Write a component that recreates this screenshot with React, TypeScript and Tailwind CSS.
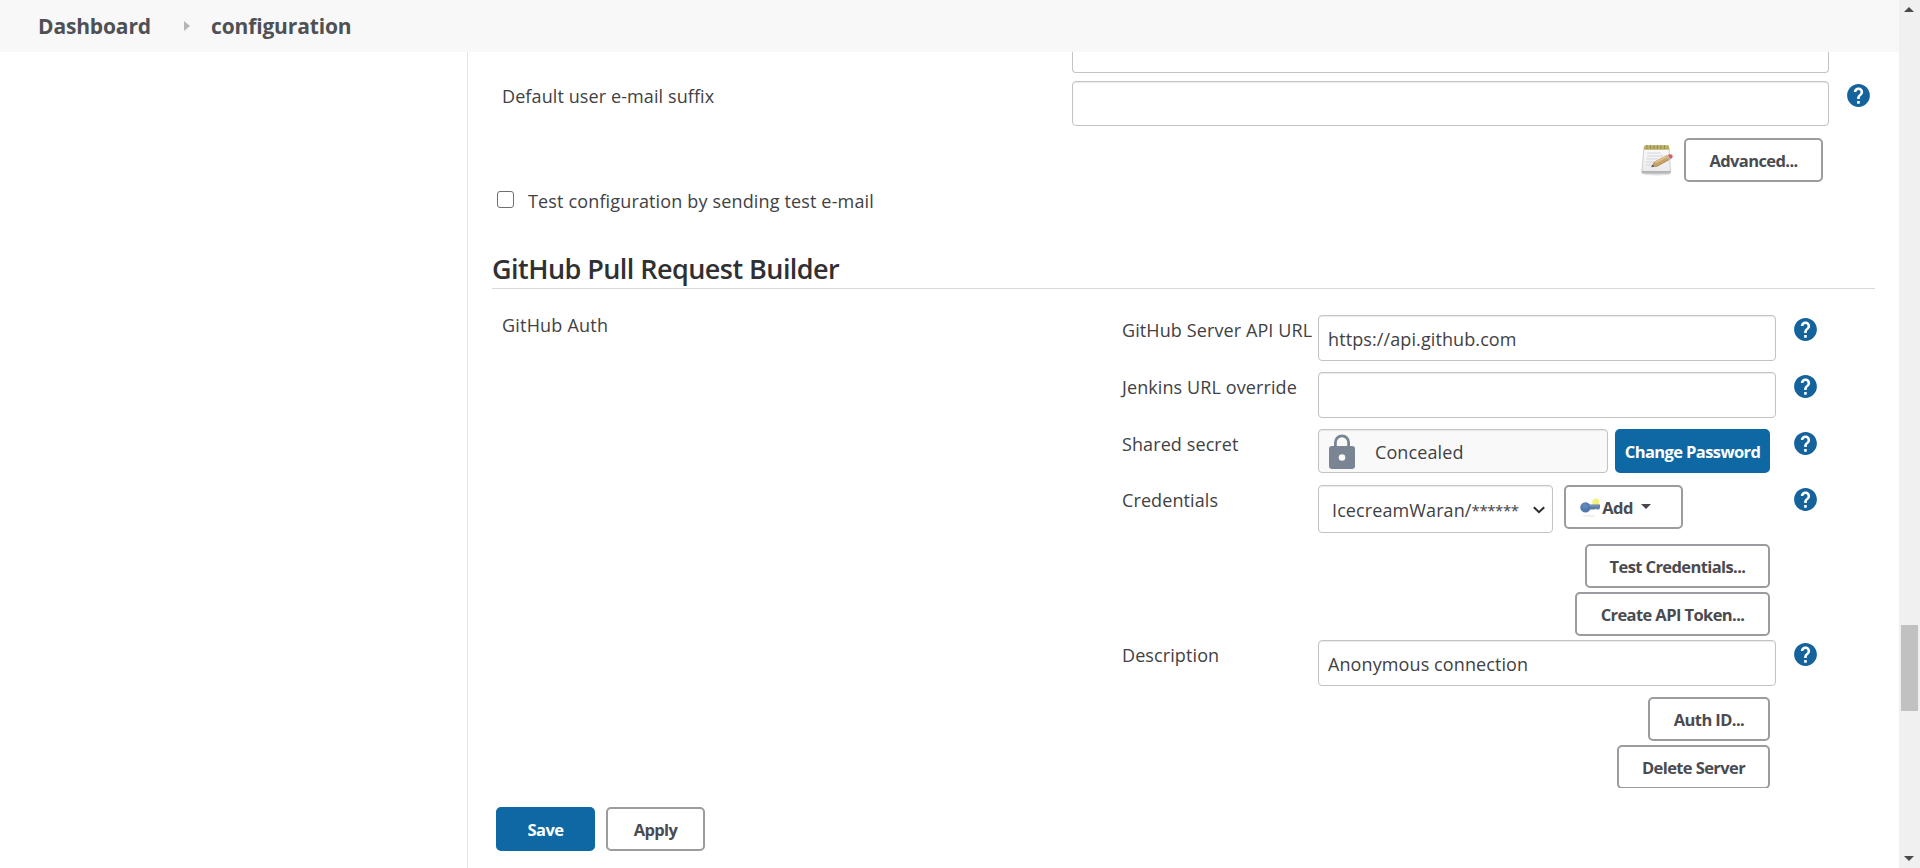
import type { ReactNode } from "react";

function HelpIcon({ className = "" }: { className?: string }) {
  return (
    <svg viewBox="1.9 1.9 20.2 20.2" className={`size-[23px] shrink-0 ${className}`} aria-label="Help">
      <path
        fill="#14639c"
        stroke="none"
        d="M12 2C6.48 2 2 6.48 2 12s4.480 10 10 10 10-4.480 10-10S17.520 2 12 2zm1.100 17.200h-2.300v-2.300h2.300v2.300zm2.070-7.850l-.9.920C13.450 13 13.100 13.600 13.100 15.100h-2.300v-.6c0-1.100.45-2.100 1.170-2.830l1.240-1.260c.37-.36.59-.86.59-1.410 0-1-.8-1.800-1.800-1.800s-1.800.8-1.800 1.800H7.900c0-2.250 1.840-4.100 4.100-4.100s4.100 1.850 4.100 4.100c0 .88-.36 1.680-.93 2.350z"
      />
    </svg>
  );
}

function NotepadIcon() {
  return (
    <svg viewBox="0 0 32 32" className="h-8 w-8 shrink-0">
      <defs>
        <linearGradient id="paper" x1="0" y1="0" x2="0" y2="1">
          <stop offset="0" stopColor="#fbfbfb" />
          <stop offset="1" stopColor="#e9e9ec" />
        </linearGradient>
      </defs>
      <ellipse cx="16" cy="30.2" rx="13" ry="1.3" fill="#000" opacity=".12" />
      <path d="M3 3h25l1.500 25.500H.8z" fill="url(#paper)" stroke="#c4c4c4" strokeWidth=".8" />
      <path d="M.8 27h28.700v2.600H.8z" fill="#b4b4b9" />
      <path d="M3.500 1.200h24.300l.4 4.600H3z" fill="#b9ae62" />
      <path d="M6 1v4M9.500 1v4M13 1v4M16.500 1v4M20 1v4M23.500 1v4" stroke="#979052" strokeWidth="1" />
      <path d="M6 9h14M6 12h16M5.500 15h11M5.500 18h8M5 21h6" stroke="#d0d3dc" strokeWidth=".9" />
      <path d="M10.500 22.800l3.300-5 12-6.200 2.600 4-12.200 6.600z" fill="#c8a466" stroke="#8e7040" strokeWidth=".6" />
      <path d="M13.800 17.800l12-6.200.9 1.300-12 6.400z" fill="#e0c48c" />
      <path d="M10.500 22.800l1.400-2.100 1.200 1.700z" fill="#444" />
      <path d="M25.300 11.900l1.500-.8 2.600 4-1.500.8z" fill="#b9bcc4" />
      <path d="M26.800 11.100c2-1.100 3.700-1 4.600.4.900 1.500 0 2.600-2 3.600z" fill="#d4605a" />
    </svg>
  );
}

function LockIcon() {
  return (
    <svg viewBox="0 0 26 35" className="h-[35px] w-[26px] shrink-0">
      <path d="M6.400 13V8.400a6.600 6.600 0 0 1 13.200 0V13" fill="none" stroke="#7a8594" strokeWidth="2.800" />
      <path
        fillRule="evenodd"
        fill="#7a8594"
        d="M3 12h20a3 3 0 0 1 3 3v17a3 3 0 0 1-3 3H3a3 3 0 0 1-3-3V15a3 3 0 0 1 3-3zm10 8.200a3.300 3.300 0 1 0 0 6.600 3.300 3.300 0 0 0 0-6.600z"
      />
    </svg>
  );
}

function KeyIcon() {
  return (
    <svg viewBox="0 0 21 20" className="h-5 w-[21px] shrink-0">
      <ellipse cx="9" cy="17.800" rx="6" ry="1" fill="#000" opacity=".07" />
      <circle cx="15.800" cy="4" r="3.600" fill="#f1ee5e" opacity=".8" />
      <path d="M8 6.600h12v3.200l-1 1.600h-2l-1-.6-1.200.6H8z" fill="#5f7fa5" />
      <circle cx="5.500" cy="9.400" r="5.200" fill="#5079b0" />
      <circle cx="5" cy="8" r="2.800" fill="#6d92c4" opacity=".6" />
      <path d="M9 7.800h10" stroke="#8ba6c6" strokeWidth=".8" />
    </svg>
  );
}

function Button({ className = "", primary = false, children }: { className?: string; primary?: boolean; children: ReactNode }) {
  const tone = primary ? "border-[#0d68a3] bg-[#0d68a3] text-white" : "border-[#9b9ba0] bg-white text-[#4a4b50]";
  return (
    <button
      className={`flex h-11 shrink-0 items-center justify-center rounded-[5px] border-2 pt-[2px] text-[16.5px] font-bold leading-5 tracking-[-0.6px] whitespace-nowrap ${tone} ${className}`}
    >
      {children}
    </button>
  );
}

function Field({ className = "", readOnly = false, children }: { className?: string; readOnly?: boolean; children?: ReactNode }) {
  return (
    <div
      className={`flex shrink-0 items-center rounded-[4px] border border-[#c3c3c6] shadow-[inset_0_1px_1px_rgba(0,0,0,0.08)] ${readOnly ? "bg-[#f9f9f9]" : "bg-white"} ${className}`}
    >
      {children}
    </div>
  );
}

function SettingRow({ label, className, children }: { label: string; className: string; children: ReactNode }) {
  return (
    <div className={`flex items-start ${className}`}>
      <div className="w-[196px] shrink-0 pt-[3px] whitespace-nowrap">{label}</div>
      <div className="flex w-[476px] shrink-0">{children}</div>
      <HelpIcon className="mt-[3px]" />
    </div>
  );
}

export default function App() {
  return (
    <div className="flex h-[868px] w-[1920px] overflow-hidden bg-white font-['Open_Sans','Noto_Sans',sans-serif] text-lg leading-6 tracking-[0.1px] text-[#414144]">
      <div className="flex w-[1899px] flex-col">
        <header className="flex h-[52px] shrink-0 items-center bg-[#f8f8f8] pl-[38px] text-[21px] font-bold tracking-[-0.15px] text-[#4e5055]">
          <span className="w-[146px]">Dashboard</span>
          <svg viewBox="0 0 6 10" className="mb-px h-[10px] w-[6px]">
            <path d="M0 0l6 5-6 5z" fill="#b5b5b8" />
          </svg>
          <span className="ml-[21px]">configuration</span>
        </header>

        <div className="flex min-h-0 flex-1">
          <aside className="w-[468px] shrink-0 border-r border-[#e4e4e5]" />
          <main className="flex flex-1 flex-col pl-6">
            <div className="flex h-[736px] shrink-0 flex-col overflow-hidden">
              <div className="ml-[580px] h-[21px] w-[757px] shrink-0 rounded-b-[4px] border border-t-0 border-[#c3c3c6]" />

              <div className="mt-2 flex items-start">
                <div className="w-[580px] shrink-0 pt-[3px] pl-[10px]">Default user e-mail suffix</div>
                <Field className="h-[45px] w-[757px]" />
                <HelpIcon className="mt-[3px] ml-[18px]" />
              </div>

              <div className="mt-3 flex h-11 w-[1331px] shrink-0 items-center justify-end gap-[11px]">
                <NotepadIcon />
                <Button className="w-[139px]">Advanced...</Button>
              </div>

              <label className="mt-[7px] flex h-6 shrink-0 items-center pl-[5px]">
                <span className="mb-[3px] size-[17px] rounded-[3px] border border-[#6f6f72] bg-white" />
                <span className="ml-[14px] tracking-[0.15px]">Test configuration by sending test e-mail</span>
              </label>

              <h2 className="mt-[37px] h-[39px] w-[1383px] shrink-0 border-b border-[#d9d9db] text-[27px] font-semibold leading-[37px] tracking-[-0.55px] text-[#303033]">
                GitHub Pull Request Builder
              </h2>

              <div className="flex items-start pt-[26px]">
                <div className="-mt-[2px] w-[630px] shrink-0 pl-[10px] tracking-[0.2px]">GitHub Auth</div>
                <div>
                  <SettingRow label="GitHub Server API URL" className="h-[57px]">
                    <Field className="h-[46px] w-[458px] pt-px pl-[9px]">https://api.github.com</Field>
                  </SettingRow>
                  <SettingRow label="Jenkins URL override" className="h-[57px]">
                    <Field className="h-[46px] w-[458px]" />
                  </SettingRow>
                  <SettingRow label="Shared secret" className="h-14">
                    <Field readOnly className="h-11 w-[290px] pl-[10px]">
                      <LockIcon />
                      <span className="ml-5 pt-px">Concealed</span>
                    </Field>
                    <Button primary className="ml-[7px] w-[155px]">Change Password</Button>
                  </SettingRow>
                  <SettingRow label="Credentials" className="h-[59px]">
                    <Field className="h-12 w-[235px] pl-[13px]">
                      <span className="flex w-[198px] items-center pt-px">
                        IcecreamWaran/<span className="text-[15px] tracking-[-0.4px]">******</span>
                      </span>
                      <svg viewBox="0 0 12 8" className="mt-px ml-[3px] h-2 w-3 shrink-0">
                        <path d="M.8 1.200L6 6.200l5.200-5" fill="none" stroke="#2b2b2b" strokeWidth="2" />
                      </svg>
                    </Field>
                    <Button className="ml-[11px] w-[119px] pr-[16px]">
                      <KeyIcon />
                      <span className="ml-px">Add</span>
                      <svg viewBox="0 0 10 5" className="mb-[3px] ml-2 h-[5px] w-[10px]">
                        <path d="M0 0h10l-5 5z" fill="#46474c" />
                      </svg>
                    </Button>
                  </SettingRow>
                  <div className="flex w-[648px] flex-col items-end gap-1">
                    <Button className="w-[185px]">Test Credentials...</Button>
                    <Button className="w-[195px]">Create API Token...</Button>
                  </div>
                  <SettingRow label="Description" className="mt-1 h-[57px]">
                    <Field className="h-[46px] w-[458px] pt-px pl-[9px]">Anonymous connection</Field>
                  </SettingRow>
                  <div className="flex w-[648px] flex-col items-end gap-1">
                    <Button className="w-[122px]">Auth ID...</Button>
                    <Button className="w-[153px]">Delete Server</Button>
                  </div>
                </div>
              </div>
            </div>

            <footer className="mt-[19px] flex gap-[11px] pl-1">
              <Button primary className="w-[99px]">Save</Button>
              <Button className="w-[99px]">Apply</Button>
            </footer>
          </main>
        </div>
      </div>

      <div className="flex w-[21px] flex-col items-center bg-[#f0f0f0] pt-[7px] pb-[7px]">
        <svg viewBox="0 0 10 5" className="mr-px h-[5px] w-[10px]">
          <path d="M0 5h10L5 0z" fill="#4a4a4a" />
        </svg>
        <div className="mt-[613px] mr-px h-[86px] w-[17px] bg-[#c1c1c1]" />
        <svg viewBox="0 0 10 5" className="mt-auto mr-px h-[5px] w-[10px]">
          <path d="M0 0h10L5 5z" fill="#4a4a4a" />
        </svg>
      </div>
    </div>
  );
}
